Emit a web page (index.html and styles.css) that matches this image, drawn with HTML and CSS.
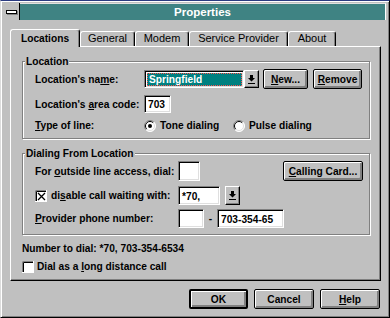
FILE: index.html
```html
<!DOCTYPE html>
<html>
<head>
<meta charset="utf-8">
<link rel="stylesheet" href="styles.css">
</head>
<body>
<div class="window">
  <div class="titlebar">
    <div class="sysmenu"><span class="sysbar"></span></div>
    <div class="title">Properties</div>
  </div>
  <div class="tabs">
    <div class="tab active t-loc">Locations</div>
    <div class="tab t-gen">General</div>
    <div class="tab t-mod">Modem</div>
    <div class="tab t-sp">Service Provider</div>
    <div class="tab t-about">About</div>
  </div>
  <div class="panel">
    <fieldset class="group g1">
      <legend>Location</legend>
      <div class="rows">
        <div class="row r-name">
          <span class="lbl w1">Location's na<u>m</u>e:</span>
          <span class="combo">
            <span class="field cfield"><span class="sel">Springfield</span></span>
            <span class="dd"><svg width="7" height="9" viewBox="0 0 7 9"><path d="M2 0h3v3h2L3.5 6.5 0 3h2z" fill="#000"/><rect y="8" width="7" height="1" fill="#000"/></svg></span>
          </span>
          <button class="btn b-new"><u>N</u>ew...</button>
          <button class="btn b-remove"><u>R</u>emove</button>
        </div>
        <div class="row r-area">
          <span class="lbl w1">Location's <u>a</u>rea code:</span>
          <span class="field f-area">703</span>
        </div>
        <div class="row r-type">
          <span class="lbl w1"><u>T</u>ype of line:</span>
          <span class="opt o-tone">
            <svg class="radio" width="12" height="12" viewBox="0 0 12 12"><circle cx="6" cy="6" r="5.5" fill="#fff"/><path d="M2.1 9.9A5.5 5.5 0 0 1 9.9 2.1" stroke="#808080" fill="none"/><path d="M9.9 2.1A5.5 5.5 0 0 1 2.1 9.9" stroke="#fff" fill="none"/><path d="M2.8 9.2A4.5 4.5 0 0 1 9.2 2.8" stroke="#000" fill="none"/><path d="M9.2 2.8A4.5 4.5 0 0 1 2.8 9.2" stroke="#dfdfdf" fill="none"/><circle cx="6" cy="6" r="2" fill="#000"/></svg>
            <span>Tone dialing</span>
          </span>
          <span class="opt o-pulse">
            <svg class="radio" width="12" height="12" viewBox="0 0 12 12"><circle cx="6" cy="6" r="5.5" fill="#fff"/><path d="M2.1 9.9A5.5 5.5 0 0 1 9.9 2.1" stroke="#808080" fill="none"/><path d="M9.9 2.1A5.5 5.5 0 0 1 2.1 9.9" stroke="#fff" fill="none"/><path d="M2.8 9.2A4.5 4.5 0 0 1 9.2 2.8" stroke="#000" fill="none"/><path d="M9.2 2.8A4.5 4.5 0 0 1 2.8 9.2" stroke="#dfdfdf" fill="none"/></svg>
            <span>Pulse dialing</span>
          </span>
        </div>
      </div>
    </fieldset>
    <fieldset class="group g2">
      <legend>Dialing From Location</legend>
      <div class="rows rows2">
        <div class="row r-out">
          <span class="lbl w2">For <u>o</u>utside line access, dial:</span>
          <span class="field f-out"></span>
          <button class="btn b-card"><u>C</u>alling Card...</button>
        </div>
        <div class="row r-wait">
          <span class="lbl w2 chklbl">
            <svg class="chk" width="12" height="12" viewBox="0 0 12 12"><rect x="0" y="0" width="12" height="12" fill="#fff"/><path d="M0.5 12V0.5H12" stroke="#808080" fill="none"/><path d="M1.5 11V1.5H11" stroke="#000" fill="none"/><path d="M11.5 0V11.5H0" stroke="#fff" fill="none"/><path d="M3 3L10 10M10 3L3 10" stroke="#000" stroke-width="1.3"/></svg>
            <span>di<u>s</u>able call waiting with:</span>
          </span>
          <span class="field f-wait">*70,</span>
          <span class="dd dd2"><svg width="7" height="9" viewBox="0 0 7 9"><path d="M2 0h3v3h2L3.5 6.5 0 3h2z" fill="#000"/><rect y="8" width="7" height="1" fill="#000"/></svg></span>
        </div>
        <div class="row r-prov">
          <span class="lbl w2"><u>P</u>rovider phone number:</span>
          <span class="field f-pa"></span>
          <span class="dash">-</span>
          <span class="field f-pn">703-354-65</span>
        </div>
      </div>
    </fieldset>
    <div class="numline">Number to dial: *70, 703-354-6534</div>
    <div class="ldrow">
      <svg class="chk" width="12" height="12" viewBox="0 0 12 12"><rect x="0" y="0" width="12" height="12" fill="#fff"/><path d="M0.5 12V0.5H12" stroke="#808080" fill="none"/><path d="M1.5 11V1.5H11" stroke="#000" fill="none"/><path d="M11.5 0V11.5H0" stroke="#fff" fill="none"/></svg>
      <span>Dial as a <u>l</u>ong distance call</span>
    </div>
  </div>
  <div class="buttons">
    <button class="btn b-ok">OK</button>
    <button class="btn b-cancel">Cancel</button>
    <button class="btn b-help"><u>H</u>elp</button>
  </div>
</div>
</body>
</html>
```
FILE: styles.css
```css
* { box-sizing: border-box; }
html, body { margin: 0; padding: 0; }
body {
  width: 390px; height: 318px; overflow: hidden;
  background: #c0c0c0;
  font: bold 10.2px/13px "Liberation Sans", Arial, sans-serif;
  color: #000;
}
u { text-decoration: underline; text-underline-offset: 1px; }
.window {
  width: 390px; height: 318px;
  border: 1px solid; border-color: #2a3a80 #000 #000 #dcdcdc;
  box-shadow: inset 1px 1px 0 #fff, inset -1px -1px 0 #808080;
  padding: 2px 3px 0 3px;
  display: flex; flex-direction: column;
  background: #c0c0c0;
}
.titlebar { display: flex; height: 17px; flex: none; }
.sysmenu {
  width: 16px; display: flex; align-items: center; justify-content: center;
  background: #c0c0c0; border-right: 1px solid #000;
}
.sysbar { width: 11px; height: 4px; border: 1px solid #000; background: #fff; box-shadow: 1px 1px 0 #808080; }
.title {
  flex: 1; background: #3f8383; color: #fff; text-align: center;
  font-size: 11.5px; line-height: 17px;
  border-top: 1px solid #e0e0e0; border-right: 1px solid #fff;
  line-height: 16px;
}
.tabs { display: flex; align-items: flex-end; height: 17px; margin-top: 9px; padding-left: 6px; flex: none; }
.tab {
  height: 15px;
  border: 1px solid #fff; border-right: 1px solid #000; border-bottom: none;
  box-shadow: inset -1px 0 0 #808080;
  border-radius: 3px 3px 0 0;
  font: 11px/13px "Liberation Sans Narrow", "Liberation Sans", sans-serif;
  text-align: center;
}
.tab.active {
  height: 18px; margin-bottom: -1px; position: relative; z-index: 1;
  background: #c0c0c0; padding-top: 2px;
  font: bold 10.2px/13px "Liberation Sans", Arial, sans-serif;
}
.t-loc { width: 70px; }
.t-gen { width: 55px; }
.t-mod { width: 54px; }
.t-sp { width: 99px; }
.t-about { width: 48px; }
.panel {
  margin-left: 6px; width: 371px; height: 235px; flex: none;
  border: 1px solid; border-color: #fff #000 #000 #fff;
  box-shadow: inset -1px -1px 0 #808080;
  padding: 8px 0 0 11px;
}
.group {
  margin: 0; padding: 0; width: 348px; min-width: 0;
  border: 1px solid #808080;
  box-shadow: 1px 1px 0 #fff, inset 1px 1px 0 #fff;
}
.group legend { padding: 0 1px; margin-left: 2px; line-height: 13px; background: #c0c0c0; }
.g2 { margin-top: 8px; }
.rows { padding: 1px 6px 6px 12px; display: flex; flex-direction: column; gap: 6px; }
.row { display: flex; align-items: center; }
.lbl { flex: none; white-space: nowrap; }
.w1 { width: 109px; }
.w2 { width: 143px; }
.r-name { height: 20px; }
.r-area { height: 18px; }
.r-type { height: 13px; }
.field {
  flex: none; display: flex; align-items: center;
  background: #fff;
  border: 1px solid; border-color: #808080 #fff #fff #808080;
  box-shadow: inset 1px 1px 0 #000, inset -1px -1px 0 #dfdfdf;
  padding: 1px 1px 0 3px; white-space: nowrap;
}
.combo { display: flex; flex: none; }
.cfield { width: 100px; height: 18px; padding: 2px 1px 1px 2px; }
.sel {
  display: block; width: 100%; height: 100%;
  background: #008080; color: #fff; padding-left: 2px; line-height: 13px;
  outline: 1px dotted #ff5050; outline-offset: -1px;
}
.dd {
  width: 15px; height: 18px; flex: none;
  display: flex; align-items: center; justify-content: center;
  background: #c0c0c0;
  border: 1px solid; border-color: #fff #000 #000 #fff;
  box-shadow: inset -1px -1px 0 #808080;
}
.btn {
  flex: none; height: 20px; padding: 0;
  background: #c0c0c0; color: #000;
  border: 1px solid #000; border-radius: 2px;
  box-shadow: inset 1px 1px 0 #fff, inset -2px -2px 0 #808080;
  font: bold 10.2px/13px "Liberation Sans", Arial, sans-serif;
}
.b-new { width: 45px; margin-left: 4px; }
.b-remove { width: 49px; margin-left: 5px; }
.f-area { width: 27px; height: 18px; }
.opt { display: flex; align-items: center; gap: 4px; flex: none; }
.o-tone { width: 89px; }
.radio, .chk { flex: none; display: block; }
.rows2 { gap: 0; }
.r-out { height: 20px; }
.r-wait { height: 19px; margin-top: 5px; }
.r-prov { height: 19px; margin-top: 4px; }
.f-out { width: 22px; height: 20px; }
.b-card { width: 80px; margin-left: auto; }
.chklbl { display: flex; align-items: center; gap: 4px; }
.f-wait { width: 42px; height: 19px; }
.dd2 { height: 19px; margin-left: 5px; }
.f-pa { width: 26px; height: 19px; }
.dash { width: 13px; text-align: center; }
.f-pn { width: 67px; height: 19px; }
.numline { margin-top: 7px; }
.ldrow { display: flex; align-items: center; gap: 3px; margin-top: 5px; }
.buttons { display: flex; justify-content: flex-end; gap: 6px; margin-top: 8px; padding-right: 6px; }
.b-ok { width: 59px; border-width: 2px; }
.b-cancel { width: 60px; }
.b-help { width: 60px; }
```
